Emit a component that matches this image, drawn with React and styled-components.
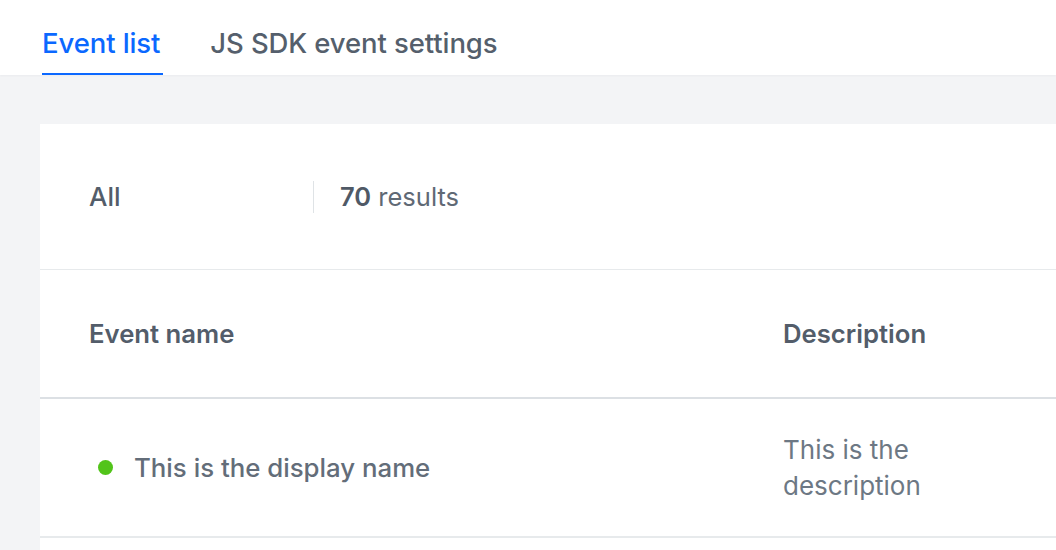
import styled, { createGlobalStyle } from "styled-components";

const GlobalStyle = createGlobalStyle`
  html, body {
    margin: 0;
    padding: 0;
    background: #f3f4f6;
    font-family: Inter, "Noto Sans", sans-serif;
    overflow: hidden;
  }
`;

const Page = styled.div`
  width: 1056px;
  height: 550px;
  background: #f3f4f6;
`;

const TabBar = styled.div`
  height: 75px;
  background: #ffffff;
  display: flex;
  gap: 47px;
  padding-left: 42px;
  box-sizing: border-box;
  box-shadow: 0 1px 2px rgba(20, 30, 40, 0.04);
`;

const Tab = styled.div`
  display: flex;
  align-items: center;
  height: 100%;
  box-sizing: border-box;
  padding: 13px 3px 0 0;
  font-size: 27.5px;
  font-weight: 500;
  letter-spacing: -0.1px;
  color: ${(p) => (p.active ? "#0b68ff" : "#555f6c")};
  border-bottom: 2px solid ${(p) => (p.active ? "#0b68ff" : "transparent")};
`;

const Content = styled.div`
  padding: 49px 0 0 40px;
`;

const Card = styled.div`
  background: #ffffff;
  height: 430px;
`;

const FilterRow = styled.div`
  height: 145px;
  display: flex;
  align-items: center;
  padding-left: 49px;
  border-bottom: 1px solid #e7eaec;
`;

const FilterLabel = styled.div`
  width: 224px;
  font-size: 26px;
  font-weight: 500;
  color: #535d6a;
`;

const Divider = styled.div`
  width: 1px;
  height: 32px;
  background: #dfe3e6;
  margin-right: 26px;
`;

const Results = styled.div`
  font-size: 25.5px;
  color: #5f6975;
  b {
    font-weight: 600;
    color: #4f5966;
  }
`;

const Row = styled.div`
  display: grid;
  grid-template-columns: 694px 1fr;
  align-items: center;
  padding-left: 49px;
  height: ${(p) => p.h}px;
  border-bottom: 2px solid ${(p) => p.line};
`;

const HeadCell = styled.div`
  font-size: 25.7px;
  font-weight: 600;
  color: #535d6a;
`;

const NameCell = styled.div`
  display: flex;
  align-items: center;
  gap: 21px;
  padding-left: 9px;
  font-size: 25.8px;
  font-weight: 500;
  color: #636d79;
`;

const Dot = styled.span`
  width: 15px;
  height: 15px;
  border-radius: 50%;
  background: #52c41a;
`;

const DescCell = styled.div`
  font-size: 26px;
  line-height: 36px;
  color: #6d7884;
  width: 180px;
`;

export default function App() {
  return (
    <Page>
      <GlobalStyle />
      <TabBar>
        <Tab active>Event list</Tab>
        <Tab>JS SDK event settings</Tab>
      </TabBar>
      <Content>
        <Card>
          <FilterRow>
            <FilterLabel>All</FilterLabel>
            <Divider />
            <Results>
              <b>70</b> results
            </Results>
          </FilterRow>
          <Row h={127} line="#dce0e4">
            <HeadCell>Event name</HeadCell>
            <HeadCell>Description</HeadCell>
          </Row>
          <Row h={137} line="#e7eaec">
            <NameCell>
              <Dot />
              This is the display name
            </NameCell>
            <DescCell>This is the description</DescCell>
          </Row>
        </Card>
      </Content>
    </Page>
  );
}
